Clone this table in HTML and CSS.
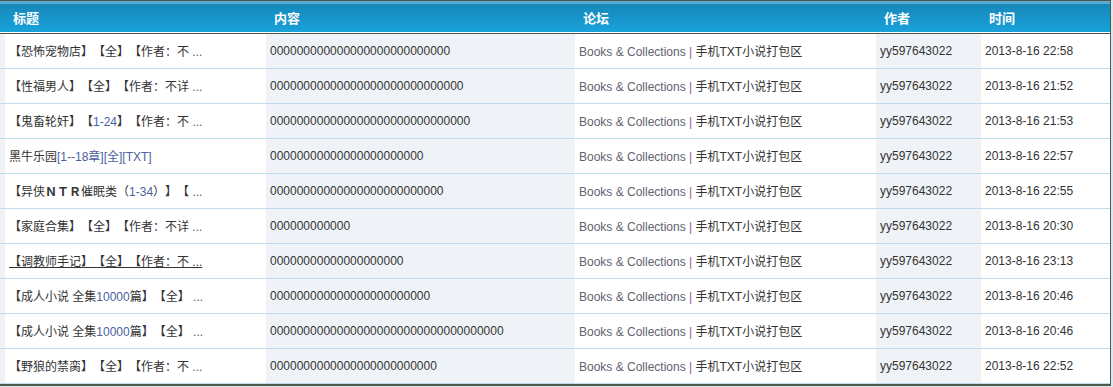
FILE: index.html
```html
<!DOCTYPE html>
<html>
<head>
<meta charset="utf-8">
<link rel="stylesheet" href="styles.css">
</head>
<body>
<table class="list">
  <colgroup>
    <col class="c0"><col class="c1"><col class="c2"><col class="c3"><col class="c4"><col class="c5">
  </colgroup>
  <thead>
    <tr><th class="g"></th><th>标题</th><th>内容</th><th>论坛</th><th>作者</th><th>时间</th></tr>
  </thead>
  <tbody>
    <tr><td class="g"></td><td class="t">【恐怖宠物店】【全】【作者：不 <span class="dots">...</span></td><td class="g z">000000000000000000000000000</td><td class="f"><span class="en">Books &amp; Collections</span> <span class="bar">|</span> 手机TXT小说打包区</td><td class="g a">yy597643022</td><td class="d">2013-8-16 22:58</td></tr>
    <tr><td class="g"></td><td class="t">【性福男人】【全】【作者：不详 <span class="dots">...</span></td><td class="g z">00000000000000000000000000000</td><td class="f"><span class="en">Books &amp; Collections</span> <span class="bar">|</span> 手机TXT小说打包区</td><td class="g a">yy597643022</td><td class="d">2013-8-16 21:52</td></tr>
    <tr><td class="g"></td><td class="t">【鬼畜轮奸】【<span class="num">1-24</span>】【作者：不 <span class="dots">...</span></td><td class="g z">000000000000000000000000000000</td><td class="f"><span class="en">Books &amp; Collections</span> <span class="bar">|</span> 手机TXT小说打包区</td><td class="g a">yy597643022</td><td class="d">2013-8-16 21:53</td></tr>
    <tr><td class="g"></td><td class="t">黑牛乐园<span class="num">[1--18章][全][TXT]</span></td><td class="g z">00000000000000000000000</td><td class="f"><span class="en">Books &amp; Collections</span> <span class="bar">|</span> 手机TXT小说打包区</td><td class="g a">yy597643022</td><td class="d">2013-8-16 22:57</td></tr>
    <tr><td class="g"></td><td class="t">【异侠<b class="fw">ＮＴＲ</b>催眠类（<span class="num">1-34</span>）】【 <span class="dots">...</span></td><td class="g z">00000000000000000000000000</td><td class="f"><span class="en">Books &amp; Collections</span> <span class="bar">|</span> 手机TXT小说打包区</td><td class="g a">yy597643022</td><td class="d">2013-8-16 22:55</td></tr>
    <tr><td class="g"></td><td class="t">【家庭合集】【全】【作者：不详 <span class="dots">...</span></td><td class="g z">000000000000</td><td class="f"><span class="en">Books &amp; Collections</span> <span class="bar">|</span> 手机TXT小说打包区</td><td class="g a">yy597643022</td><td class="d">2013-8-16 20:30</td></tr>
    <tr><td class="g"></td><td class="t"><span class="hover">【调教师手记】【全】【作者：不 ...</span></td><td class="g z">00000000000000000000</td><td class="f"><span class="en">Books &amp; Collections</span> <span class="bar">|</span> 手机TXT小说打包区</td><td class="g a">yy597643022</td><td class="d">2013-8-16 23:13</td></tr>
    <tr><td class="g"></td><td class="t">【成人小说 全集<span class="num">10000</span>篇】【全】 <span class="dots">...</span></td><td class="g z">000000000000000000000000</td><td class="f"><span class="en">Books &amp; Collections</span> <span class="bar">|</span> 手机TXT小说打包区</td><td class="g a">yy597643022</td><td class="d">2013-8-16 20:46</td></tr>
    <tr><td class="g"></td><td class="t">【成人小说 全集<span class="num">10000</span>篇】【全】 <span class="dots">...</span></td><td class="g z">00000000000000000000000000000000000</td><td class="f"><span class="en">Books &amp; Collections</span> <span class="bar">|</span> 手机TXT小说打包区</td><td class="g a">yy597643022</td><td class="d">2013-8-16 20:46</td></tr>
    <tr><td class="g"></td><td class="t">【野狼的禁脔】【全】【作者：不 <span class="dots">...</span></td><td class="g z">0000000000000000000000000</td><td class="f"><span class="en">Books &amp; Collections</span> <span class="bar">|</span> 手机TXT小说打包区</td><td class="g a">yy597643022</td><td class="d">2013-8-16 22:52</td></tr>
  </tbody>
</table>
</body>
</html>
```

FILE: styles.css
```css
html, body {
  margin: 0;
  padding: 0;
  background: #dbe8f1;
}
body {
  font-family: "Liberation Sans", "Noto Sans CJK SC", sans-serif;
  font-size: 12px;
  text-spacing-trim: space-all;
}
.list {
  border-collapse: separate;
  border-spacing: 0;
  table-layout: fixed;
  width: 1111px;
  border-top: 1px solid #4d5552;
  border-right: 1px solid #4d5a46;
  border-bottom: 2px solid #4e5a48;
  background: #fff;
}
.c0 { width: 5px; }
.c1 { width: 261px; }
.c2 { width: 309px; }
.c3 { width: 301px; }
.c4 { width: 105px; }
.c5 { width: 129px; }

.list th {
  padding: 0 0 0 8px;
  text-align: left;
  color: #fff;
  font-weight: bold;
  font-size: 13px;
  font-family: "Noto Sans CJK SC", "Liberation Sans", sans-serif;
  background: linear-gradient(#1685b6, #19a3dc);
  box-shadow: inset 0 3px 0 #5aa9cf, inset 0 -1px 0 #ffffff;
  border-bottom: 1px solid #4b5043;
  box-sizing: border-box;
  height: 33px;
  vertical-align: middle;
}
.list th.g { padding: 0; }

.list td {
  height: 35px;
  box-sizing: border-box;
  padding: 0 0 1px 4px;
  border-bottom: 1px solid #bddcef;
  white-space: nowrap;
  overflow: hidden;
  vertical-align: middle;
  color: #333;
}
.list td.g { background: #eff3f7; }
.list td:first-child { padding: 0; }

.t { color: #3a3a3a; }
.t .dots { color: #555; }
.num { color: #4a62a0; }
.fw { font-weight: bold; }
.hover { text-decoration: underline; color: #333; }

.z { color: #1c1c38; }
.f { color: #555; }
.f .en { color: #626270; }
.f .bar { color: #8a5c9a; }
.a { color: #808080; }
.d { color: #000; }
```
